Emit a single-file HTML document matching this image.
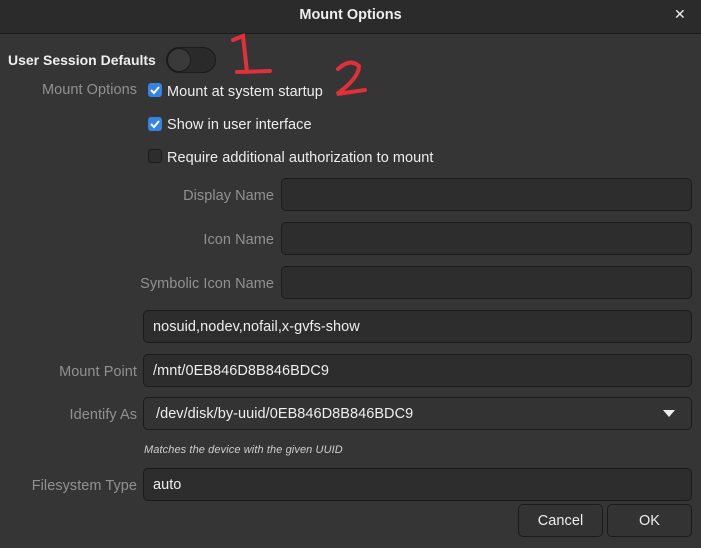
<!DOCTYPE html>
<html><head><style>
body{margin:0;width:701px;height:548px;background:#353535;font-family:"Liberation Sans","DejaVu Sans",sans-serif;color:#eeeeec;position:relative;overflow:hidden;font-size:14.5px;letter-spacing:0.05px}
.t{position:absolute;white-space:nowrap}
.lab{color:#919191;text-align:right;right:564px}
.e{position:absolute;background:#2d2d2d;border:1px solid #1b1b1b;border-radius:5px;box-sizing:border-box;height:33px;padding-left:9px;line-height:33px;color:#eeeeec}
.cb{position:absolute;width:14px;height:14px;border-radius:3px;box-sizing:border-box}
.on{background:#3584e4}
.off{border:1px solid #1b1b1b;background:#2d2d2d}
.btn{position:absolute;background:#333;border:1px solid #1b1b1b;border-radius:5px;box-sizing:border-box;height:33px;line-height:33px;text-align:center}
</style></head><body>
<div style="position:absolute;left:0;top:0;width:701px;height:33px;background:#2b2b2b;border-bottom:1px solid #1b1b1b"></div>
<div class="t" style="left:0;width:701px;text-align:center;top:7px;font-weight:bold;font-size:14.5px;letter-spacing:0">Mount Options</div>
<div class="t" style="left:674px;top:6px;font-size:14px;font-weight:300">✕</div>
<div class="t" style="left:8px;top:52px;font-weight:bold;letter-spacing:0;font-size:14px">User Session Defaults</div>
<div style="position:absolute;left:166px;top:47px;width:50px;height:26px;border-radius:13px;background:#2a2a2a;border:1px solid #1b1b1b;box-sizing:border-box"></div>
<div style="position:absolute;left:167px;top:48px;width:24px;height:24px;border-radius:12px;background:#3a3a3a;border:1px solid #1b1b1b;box-sizing:border-box"></div>
<svg style="position:absolute;left:225px;top:32px" width="150" height="70"><path d="M8 8 L18 4 L22 40 M12 40 L45 39" stroke="#e0303a" stroke-width="4" fill="none" stroke-linecap="round"/><path d="M113 37 Q125 26 134 34 Q134 46 112 62 L140 58" stroke="#e0303a" stroke-width="4" fill="none" stroke-linecap="round"/></svg>
<div class="t lab" style="top:82px">Mount Options</div>
<div class="cb on" style="left:148px;top:83px"><svg width="14" height="14"><path d="M3 7 L6 10 L11 4" stroke="#fff" stroke-width="2" fill="none"/></svg></div>
<div class="t" style="left:167px;top:84px">Mount at system startup</div>
<div class="cb on" style="left:148px;top:117px"><svg width="14" height="14"><path d="M3 7 L6 10 L11 4" stroke="#fff" stroke-width="2" fill="none"/></svg></div>
<div class="t" style="left:167px;top:117px">Show in user interface</div>
<div class="cb off" style="left:148px;top:149px"></div>
<div class="t" style="left:167px;top:150px">Require additional authorization to mount</div>
<div class="t lab" style="top:188px;right:427px">Display Name</div>
<div class="e" style="left:281px;top:178px;width:411px"></div>
<div class="t lab" style="top:232px;right:427px">Icon Name</div>
<div class="e" style="left:281px;top:222px;width:411px"></div>
<div class="t lab" style="top:276px;right:427px">Symbolic Icon Name</div>
<div class="e" style="left:281px;top:266px;width:411px"></div>
<div class="e" style="left:143px;top:310px;width:549px">nosuid,nodev,nofail,x-gvfs-show</div>
<div class="t lab" style="top:364px">Mount Point</div>
<div class="e" style="left:143px;top:354px;width:549px">/mnt/0EB846D8B846BDC9</div>
<div class="t lab" style="top:407px">Identify As</div>
<div class="e" style="left:143px;top:397px;width:549px;background:#333;padding-left:12px">/dev/disk/by-uuid/0EB846D8B846BDC9<svg style="position:absolute;right:16px;top:12px" width="12" height="8"><path d="M0 0 L12 0 L6 7Z" fill="#eee"/></svg></div>
<div class="t" style="left:144px;top:444px;font-size:11px;font-style:italic;color:#cfcfcf;letter-spacing:0.1px">Matches the device with the given UUID</div>
<div class="t lab" style="top:478px">Filesystem Type</div>
<div class="e" style="left:143px;top:468px;width:549px">auto</div>
<div class="btn" style="left:518px;top:504px;width:85px">Cancel</div>
<div class="btn" style="left:607px;top:504px;width:85px">OK</div>
</body></html>
